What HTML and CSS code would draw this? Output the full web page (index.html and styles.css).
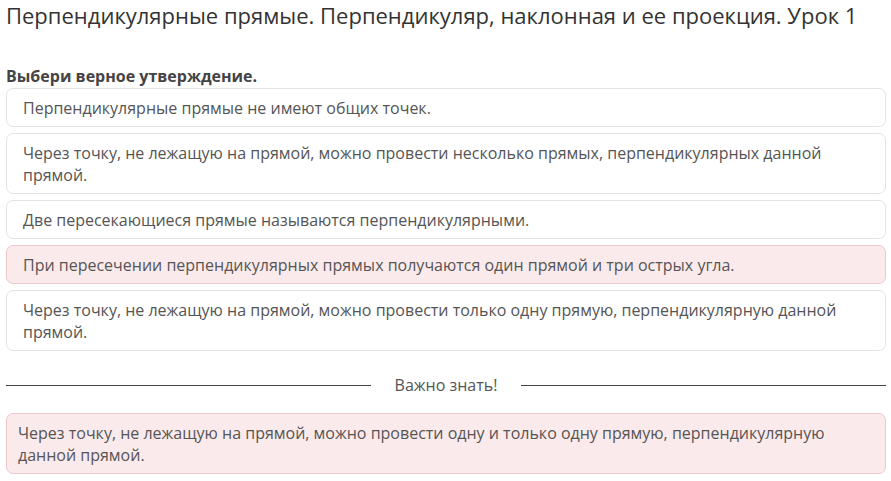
FILE: index.html
```html
<!DOCTYPE html>
<html lang="ru">
<head>
<meta charset="utf-8">
<title>Урок</title>
<link rel="stylesheet" href="styles.css">
</head>
<body>
<div class="page">
  <h1 class="title">Перпендикулярные прямые. Перпендикуляр, наклонная и ее проекция. Урок 1</h1>
  <div class="question">Выбери верное утверждение.</div>
  <div class="options">
    <div class="option">Перпендикулярные прямые не имеют общих точек.</div>
    <div class="option">Через точку, не лежащую на прямой, можно провести несколько прямых, перпендикулярных данной прямой.</div>
    <div class="option">Две пересекающиеся прямые называются перпендикулярными.</div>
    <div class="option option-wrong">При пересечении перпендикулярных прямых получаются один прямой и три острых угла.</div>
    <div class="option">Через точку, не лежащую на прямой, можно провести только одну прямую, перпендикулярную данной прямой.</div>
  </div>
  <div class="divider"><span class="divider-line"></span><span class="divider-text">Важно знать!</span><span class="divider-line"></span></div>
  <div class="note">Через точку, не лежащую на прямой, можно провести одну и только одну прямую, перпендикулярную данной прямой.</div>
</div>
</body>
</html>
```
FILE: styles.css
```css
html, body {
  margin: 0;
  padding: 0;
  background: #ffffff;
}
body {
  font-family: "Open Sans", "Liberation Sans", sans-serif;
  color: #555555;
}
.page {
  width: 880px;
  margin-left: 6px;
}
.title {
  margin: 0;
  font-size: 22px;
  font-weight: 400;
  line-height: 30px;
  color: #333333;
  white-space: nowrap;
}
.question {
  margin-top: 35px;
  font-size: 16px;
  font-weight: 700;
  line-height: 22px;
  color: #444444;
}
.options {
  margin-top: 1px;
  display: flex;
  flex-direction: column;
  gap: 6px;
}
.option {
  border: 1px solid #e3e3e3;
  border-radius: 7px;
  padding: 7.5px 16px;
  font-size: 16px;
  line-height: 22px;
  background: #ffffff;
}
.option-wrong {
  background: #fbeaeb;
  border-color: #eec7ca;
}
.divider {
  margin-top: 23px;
  display: flex;
  align-items: center;
  gap: 24px;
  font-size: 16px;
  line-height: 22px;
}
.divider-line {
  flex: 1;
  height: 1px;
  background: #444444;
}
.divider-text {
  color: #555555;
}
.note {
  margin-top: 17px;
  background: #fbeaeb;
  border: 1px solid #eec7ca;
  border-radius: 7px;
  padding: 7.5px 11px;
  font-size: 16px;
  line-height: 22px;
}
```
